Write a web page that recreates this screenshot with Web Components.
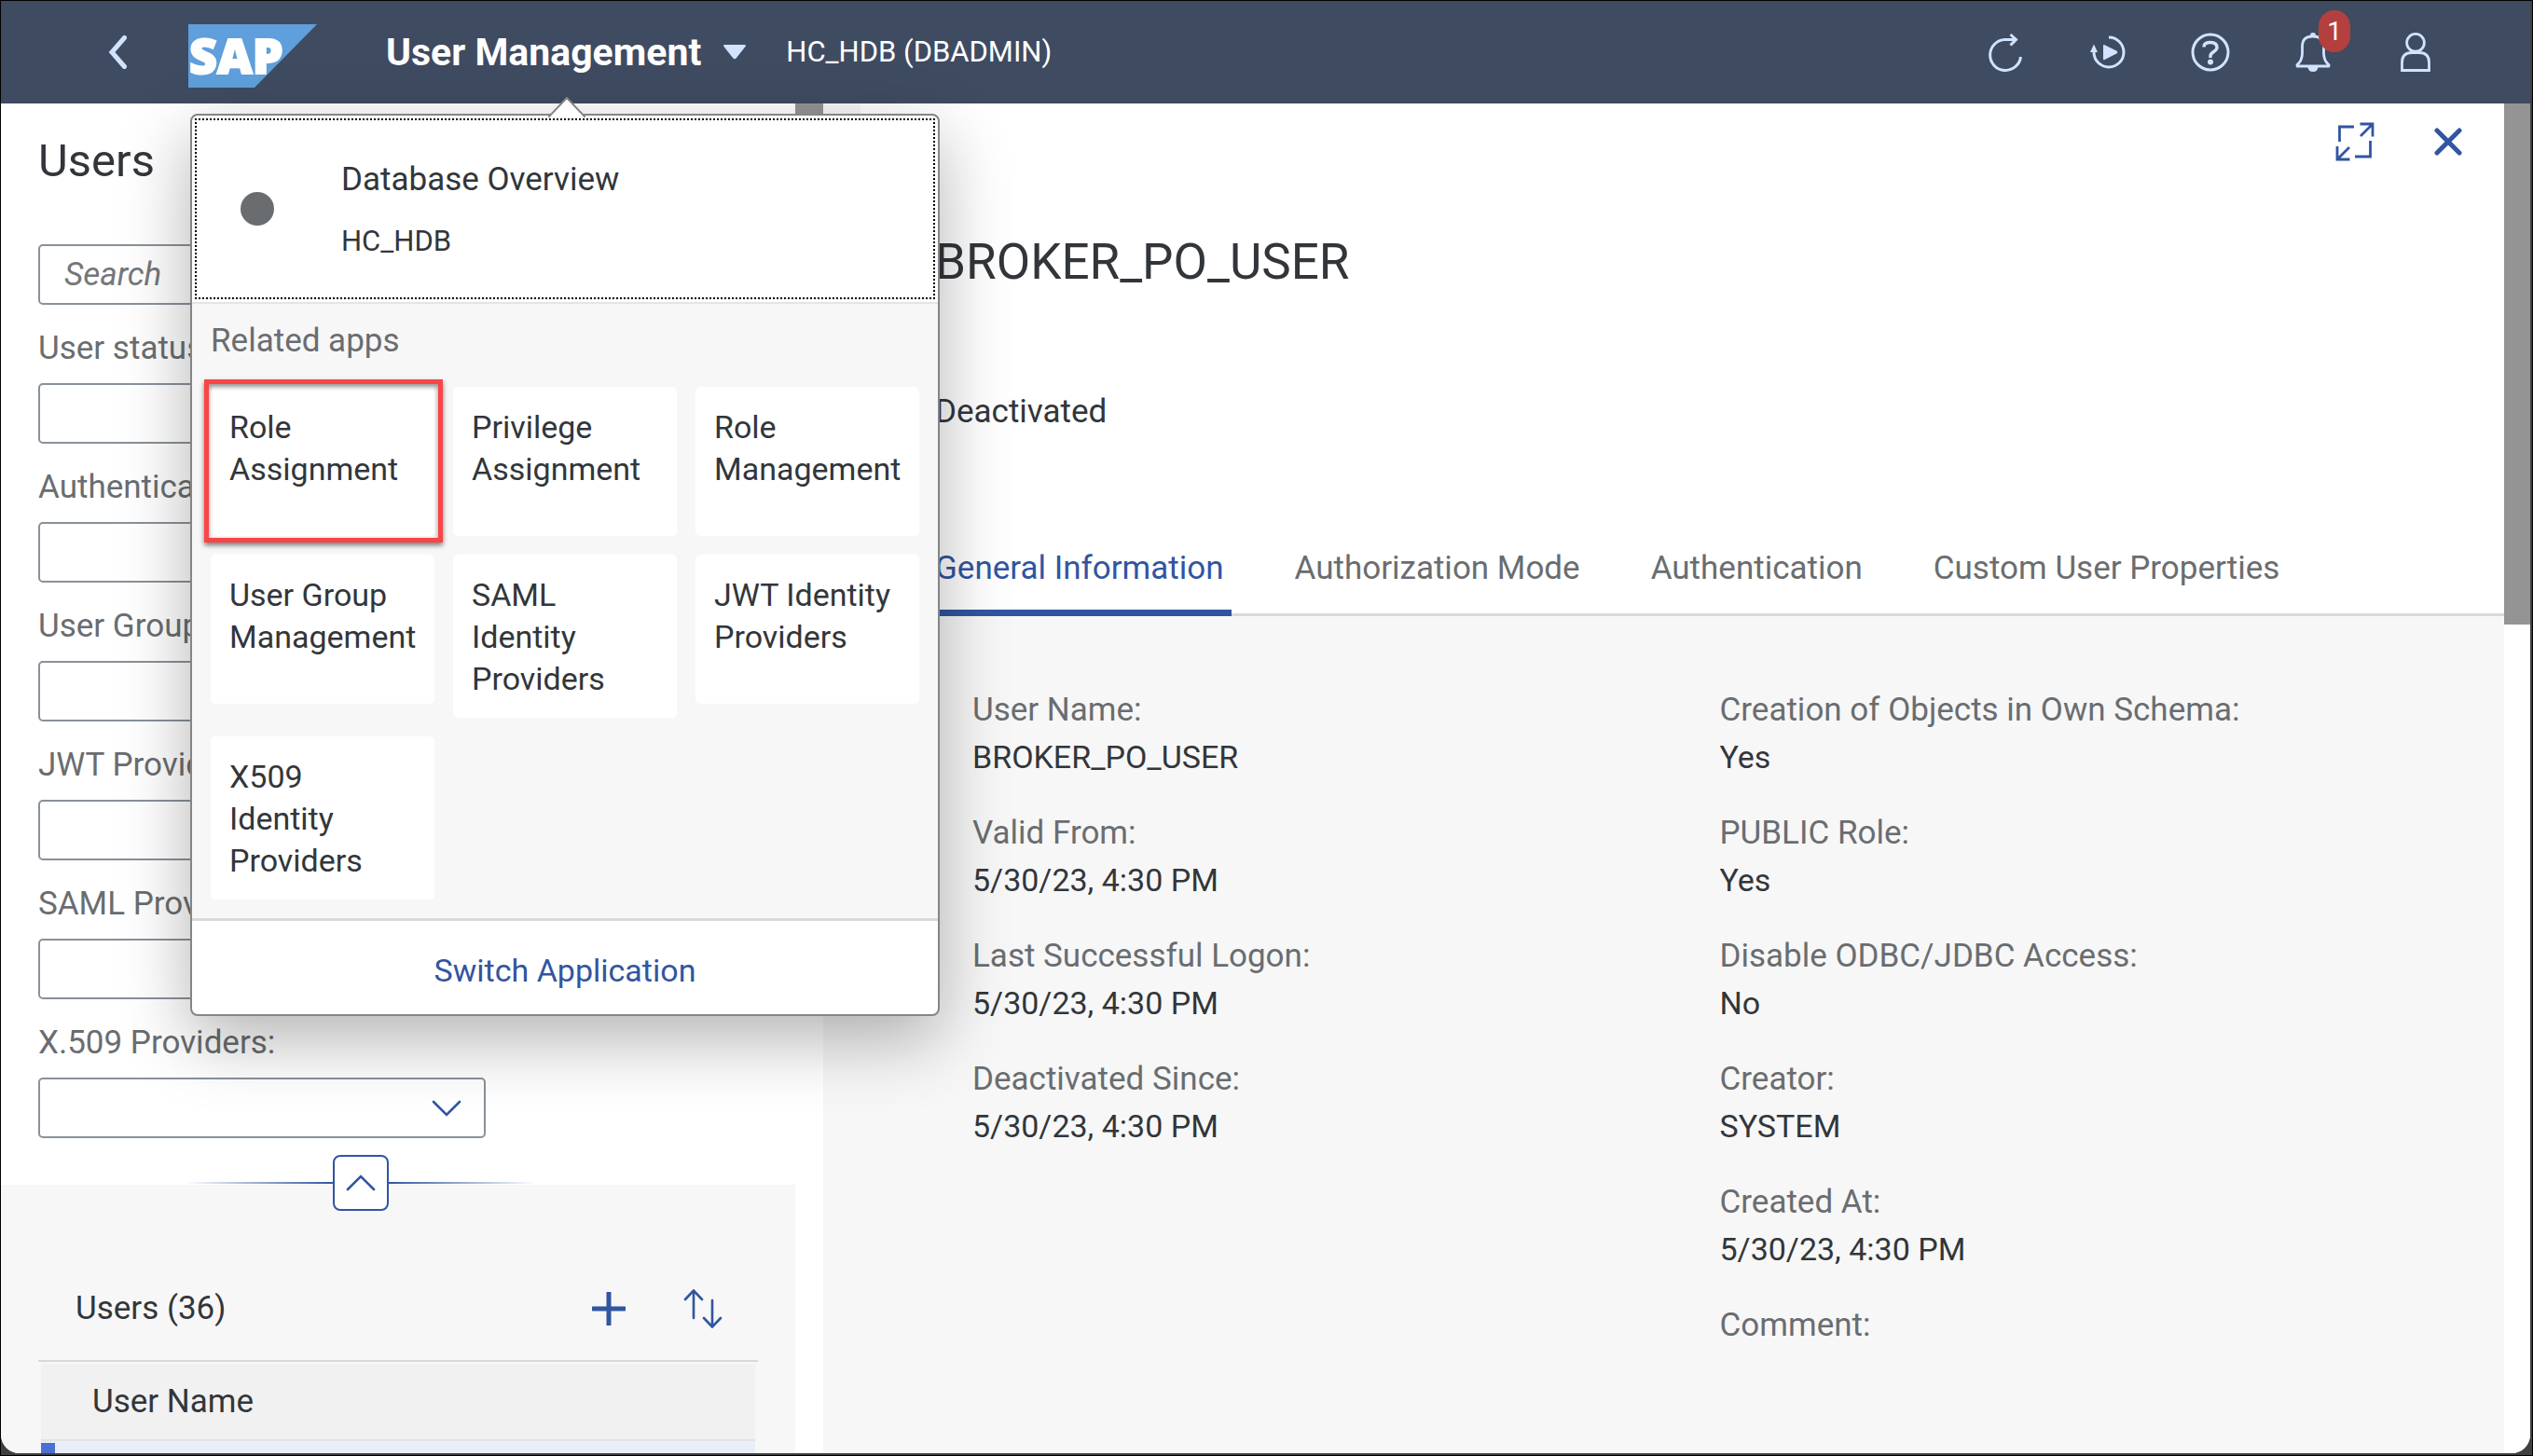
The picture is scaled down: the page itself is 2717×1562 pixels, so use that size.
<!DOCTYPE html>
<html lang="en">
<head>
<meta charset="utf-8">
<title>User Management</title>
<style>
  html { height: 100%; }
  body {
    margin: 0; height: 100vh; box-sizing: border-box; border: 1px solid #000;
    background: #404043; overflow: hidden;
    font-family: Roboto, "Liberation Sans", sans-serif; font-size: 35px; line-height: 50px; color: #32363a;
    --brand: #3155a1; --label: #6a6d70; --page: #f7f7f7; --line: #d9d9d9; --field: #89919a;
  }
</style>
</head>
<body>
<app-window></app-window>
<script>
const base = `*{box-sizing:border-box} button{font:inherit;color:inherit;background:none;border:0;padding:0;margin:0;cursor:pointer} h1,h2,h3,p,dl,dd,dt{margin:0;font:inherit}`;
function define(name, css, html) {
  const template = document.createElement('template');
  template.innerHTML = `<style>${base}${css}</style>`;
  customElements.define(name, class extends HTMLElement {
    constructor() {
      super();
      const root = this.attachShadow({ mode: 'open' });
      root.append(template.content.cloneNode(true));
      const body = document.createElement('template');
      body.innerHTML = typeof html === 'function' ? html(this) : html;
      root.append(body.content);
    }
  });
}

/* Icons: [width, height, markup] */
const icons = {
  back: [20, 36, '<path d="M17.500 2.500 4 18 17.500 33.500" stroke-width="5" stroke-linecap="round"/>'],
  caret: [24, 16, '<path d="M1 0H23Q24.500 0 23.500 2L14 14Q12 16.500 10 14L.5 2Q-.5 0 1 0Z" fill="currentColor" stroke="none"/>'],
  refresh: [40, 42, '<path d="M32 7.500H19.500A16.500 16.500 0 1 0 36.500 26" stroke-width="3"/><path d="M25.500 2 31.500 7.500 25.500 13.500" stroke-width="3"/>'],
  replay: [40, 36, '<path d="M21 2A16 16 0 1 1 5 18V13" stroke-width="3"/><path d="M1 18 5 9.500 9 18Z" fill="currentColor" stroke="none"/><path d="M15 11Q15 9.500 16.500 10.200L29.800 16.800Q31 18 29.800 19.200L16.500 26Q15 27 15 25Z" fill="currentColor" stroke="none"/>'],
  help: [42, 42, '<circle cx="21" cy="21" r="19" stroke-width="3"/><path d="M14 15.500C14 11.500 17 10.500 21 10.500S28 12 28 16C28 20.500 21 20.500 21 25V27" stroke-width="3.400"/><circle cx="21" cy="31.500" r="3" fill="currentColor" stroke="none"/>'],
  bell: [38, 42, '<path d="M2 34.500Q7.500 30 7.500 22V15Q7.500 4 19 4T30.500 15V22Q30.500 30 36 34.500V36H2Z" stroke-width="2.800" stroke-linejoin="round"/><path d="M16 3Q16 0 19 0T22 3ZM13.500 37H24.500Q24 42 19 42T13.500 37Z" fill="currentColor" stroke="none"/>'],
  person: [34, 42, '<circle cx="17" cy="10.800" r="9.400" stroke-width="2.800"/><path d="M2.500 40.500V32Q2.500 21.500 13 21.500H21Q31.500 21.500 31.500 32V40.500Z" stroke-width="2.800"/>'],
  expand: [42, 42, '<path d="M4.500 21V5H20M37.500 20V37H21M26.500 2H40V15.500M40 2 27 15M2 26V40H15.500M2 40 15 27" stroke-width="2.800"/>'],
  close: [30, 30, '<path d="M3 3 27 27M27 3 3 27" stroke-width="5" stroke-linecap="round"/>'],
  down: [32, 18, '<path d="M2 2 16 16 30 2" stroke-width="2.600" stroke-linecap="round"/>'],
  up: [32, 18, '<path d="M2 16 16 2 30 16" stroke-width="2.600" stroke-linecap="round"/>'],
  plus: [36, 36, '<path d="M18 1V35M1 18H35" stroke-width="5" stroke-linecap="round"/>'],
  sort: [42, 42, '<path d="M11 31V2M2 11 11 1.500 20 11M31 12V40M22 31 31 40.500 40 31" stroke-width="2.600" stroke-linecap="round"/>']
};
define('ui-icon', ':host{display:inline-flex} svg{display:block}', el => {
  const [w, h, d] = icons[el.getAttribute('name')];
  return `<svg width="${w}" height="${h}" viewBox="0 0 ${w} ${h}" fill="none" stroke="currentColor" aria-hidden="true">${d}</svg>`;
});

define('sap-logo', ':host{display:block} svg{display:block;overflow:visible}', `
  <svg width="138" height="68" viewBox="0 0 138 68" role="img" aria-label="SAP">
    <path d="M0 0H138L71 68H0Z" fill="#5f9fdb"/>
    <text x="1" y="53" font-family="Open Sans, Liberation Sans, sans-serif" font-weight="800" font-size="52" fill="#fff" stroke="#fff" stroke-width="2">SAP</text>
  </svg>`);

define('shell-header', `
  :host{display:flex;align-items:center;flex:none;height:110px;background:#3f4b61;color:#d1e3fe;padding:0 78px 0 80px}
  .back{width:90px;height:90px;display:grid;place-items:center}
  sap-logo{margin:7px 0 0 31px}
  .title{display:flex;align-items:center;gap:24px;margin-left:74px;color:#fff;font-weight:700;font-size:41px}
  .title ui-icon{color:#d1e3fe}
  .system{margin-left:43px;color:#fff;font-size:31px}
  nav{margin-left:auto;display:flex;gap:20px}
  nav button{position:relative;width:90px;height:90px;display:grid;place-items:center}
  .badge{position:absolute;left:51px;top:0;width:34px;height:45px;border-radius:17px;background:#b3403f;color:#fff;font-size:28px;line-height:46px}
`, `
  <button class="back" aria-label="Back"><ui-icon name="back"></ui-icon></button>
  <sap-logo></sap-logo>
  <button class="title"><span>User Management</span><ui-icon name="caret"></ui-icon></button>
  <span class="system">HC_HDB (DBADMIN)</span>
  <nav aria-label="Tools">
    <button aria-label="Refresh"><ui-icon name="refresh"></ui-icon></button>
    <button aria-label="Auto refresh"><ui-icon name="replay"></ui-icon></button>
    <button aria-label="Help"><ui-icon name="help"></ui-icon></button>
    <button aria-label="Notifications"><ui-icon name="bell"></ui-icon><span class="badge">1</span></button>
    <button aria-label="Profile"><ui-icon name="person"></ui-icon></button>
  </nav>`);

define('select-field', `
  :host{display:grid;gap:12px;color:var(--label)}
  .box{display:grid;align-items:center}
  .box>*{grid-area:1/1}
  select{appearance:none;font:inherit;width:100%;height:65px;border:2px solid var(--field);border-radius:5px;background:transparent;padding:0 70px 0 28px;margin:0}
  ui-icon{justify-self:end;margin-right:26px;color:var(--brand);pointer-events:none}
`, `
  <label for="field"><slot></slot></label>
  <div class="box"><select id="field"><option></option></select><ui-icon name="down"></ui-icon></div>`);

define('filter-panel', `
  :host{display:block;flex:none;padding:30px 40px 0;height:1160px;background:#fff}
  h2{font-size:49px;line-height:64px;margin:0 0 57px}
  form{display:grid;gap:22px;width:480px}
  input{font:inherit;font-style:italic;width:100%;height:65px;border:2px solid var(--field);border-radius:5px;background:#fff;padding:0 26px;margin:0}
  input::placeholder{color:#74777a;opacity:1}
`, `
  <h2>Users</h2>
  <form>
    <input type="search" aria-label="Search users" placeholder="Search">
    <select-field>User status:</select-field>
    <select-field>Authentication:</select-field>
    <select-field>User Group:</select-field>
    <select-field>JWT Providers:</select-field>
    <select-field>SAML Providers:</select-field>
    <select-field>X.509 Providers:</select-field>
  </form>`);

define('collapse-bar', `
  :host{display:flex;align-items:center;flex:none;width:376px;height:60px;margin:-32px 0 -28px 198px;color:var(--brand);z-index:1}
  i{flex:1;height:2px;background:linear-gradient(to right,transparent,currentColor)}
  i:last-child{background:linear-gradient(to left,transparent,currentColor)}
  button{width:60px;height:60px;border:2px solid;border-radius:8px;background:#fff;color:var(--brand);display:grid;place-items:center}
`, `<i></i><button aria-label="Collapse header"><ui-icon name="up"></ui-icon></button><i></i>`);

define('user-list', `
  :host{display:block;flex:1;min-height:0;overflow:hidden;background:var(--page);padding:78px 40px 0}
  header{display:flex;align-items:center;height:112px;padding:0 38px 0 40px;border-bottom:2px solid var(--line)}
  h3{margin-right:auto}
  header button{display:grid;color:var(--brand);margin-left:62px}
  table{width:calc(100% - 6px);margin:2px 3px 0;border-collapse:collapse}
  th{font-weight:400;text-align:left;height:82px;padding:0 55px;background:#f1f1f1;border-bottom:2px solid #e4e4e4}
  td{height:82px;padding:0;background:#e8effa}
  td i{display:block;width:15px;height:78px;background:#4a70d3}
`, `
  <header><h3>Users (36)</h3>
    <button aria-label="Create user"><ui-icon name="plus"></ui-icon></button>
    <button aria-label="Sort"><ui-icon name="sort"></ui-icon></button>
  </header>
  <table><thead><tr><th scope="col">User Name</th></tr></thead><tbody><tr><td><i></i></td></tr></tbody></table>`);

define('info-field', `
  :host{display:block;line-height:51px}
  dt{color:var(--label)}
  dd{min-height:51px;font-size:34px}
`, `<dl><dt><slot name="label"></slot></dt><dd><slot></slot></dd></dl>`);

define('object-page', `
  :host{display:flex;flex-direction:column;flex:1;min-width:0;background:var(--page)}
  header{position:relative;background:#fff;margin-left:40px;padding:140px 40px 0 80px}
  .actions{position:absolute;right:45px;top:20px;display:flex;align-items:center;gap:64px;color:var(--brand)}
  .actions button{display:grid}
  h1{font-size:53px;line-height:60px;margin-bottom:106px}
  .status{line-height:50px;margin-bottom:92px}
  .tabs{display:flex;gap:60px;height:102px;color:var(--label);background:#fff;margin-left:40px;padding:0 0 0 72px;border-bottom:3px solid var(--line)}
  .tabs button{display:flex;height:102px;padding:26px 8px 0;line-height:50px}
  .tabs button[aria-selected=true]{color:var(--brand);box-shadow:inset 0 -7px var(--brand);border-radius:4px 4px 0 0}
  .info{display:grid;grid-template-columns:1fr 1fr;padding:75px 40px 0 160px}
  .col{display:grid;gap:30px;align-content:start}
`, `
  <header>
    <div class="actions"><button aria-label="Full screen"><ui-icon name="expand"></ui-icon></button><button aria-label="Close"><ui-icon name="close"></ui-icon></button></div>
    <h1>BROKER_PO_USER</h1>
    <p class="status">Deactivated</p>
  </header>
  <div class="tabs" role="tablist">
    <button role="tab" aria-selected="true">General Information</button>
    <button role="tab">Authorization Mode</button>
    <button role="tab">Authentication</button>
    <button role="tab">Custom User Properties</button>
  </div>
  <section class="info">
    <div class="col">
      <info-field><span slot="label">User Name:</span>BROKER_PO_USER</info-field>
      <info-field><span slot="label">Valid From:</span>5/30/23, 4:30 PM</info-field>
      <info-field><span slot="label">Last Successful Logon:</span>5/30/23, 4:30 PM</info-field>
      <info-field><span slot="label">Deactivated Since:</span>5/30/23, 4:30 PM</info-field>
    </div>
    <div class="col">
      <info-field><span slot="label">Creation of Objects in Own Schema:</span>Yes</info-field>
      <info-field><span slot="label">PUBLIC Role:</span>Yes</info-field>
      <info-field><span slot="label">Disable ODBC/JDBC Access:</span>No</info-field>
      <info-field><span slot="label">Creator:</span>SYSTEM</info-field>
      <info-field><span slot="label">Created At:</span>5/30/23, 4:30 PM</info-field>
      <info-field><span slot="label">Comment:</span></info-field>
    </div>
  </section>`);

define('scroll-bar', `
  :host{display:block;flex:none;background:#fff}
  i{display:block;height:559px;background:#949494}
`, `<i></i>`);

define('app-tile', `
  :host{display:block;position:relative}
  button{display:flex;width:100%;min-height:160px;padding:21px 24px 19px 20px;border-radius:5px;background:#fff;text-align:left;font-size:34px;line-height:45px}
  :host([marked])::after{content:"";position:absolute;inset:-8px -9px -7px -7px;border:5px solid #fa4446;box-shadow:0 3px 5px rgba(0,0,0,.5),inset 0 3px 5px rgba(0,0,0,.4)}
`, `<button><slot></slot></button>`);

define('app-switcher', `
  :host{position:absolute;left:203px;top:121px;width:804px;border:2px solid #858585;border-radius:8px;background:#fff;box-shadow:0 25px 75px rgba(0,0,0,.3);z-index:2}
  .arrow{position:absolute;left:382px;top:-20px}
  .current{display:flex;align-items:center;width:100%;height:202px;padding:3px;border-bottom:2px solid #e4e4e4}
  .focus{display:flex;align-items:center;flex:1;height:194px;border:2px dotted #000;gap:72px;padding-left:47px;text-align:left}
  .dot{width:36px;height:36px;border-radius:50%;background:#6a6d70}
  .lines{display:grid;gap:16px;padding-top:3px}
  small{font-size:31px}
  section{background:var(--page);padding:0 20px 20px}
  h2{color:var(--label);line-height:80px;margin-bottom:9px}
  .grid{display:grid;grid-template-columns:repeat(3,minmax(0,1fr));gap:20px;align-items:start}
  .switch{display:block;width:100%;height:103px;padding-top:5px;border-top:3px solid var(--line);color:var(--brand);font-size:34px}
`, `
  <svg class="arrow" width="40" height="22" viewBox="0 0 40 22" aria-hidden="true"><path d="M0 22 20 1 40 22" fill="#fff" stroke="#858585" stroke-width="2"/></svg>
  <button class="current"><span class="focus"><span class="dot"></span><span class="lines"><span>Database Overview</span><small>HC_HDB</small></span></span></button>
  <section>
    <h2>Related apps</h2>
    <div class="grid">
      <app-tile marked>Role Assignment</app-tile>
      <app-tile>Privilege Assignment</app-tile>
      <app-tile>Role Management</app-tile>
      <app-tile>User Group Management</app-tile>
      <app-tile>SAML Identity Providers</app-tile>
      <app-tile>JWT Identity Providers</app-tile>
      <app-tile>X509 Identity Providers</app-tile>
    </div>
  </section>
  <button class="switch">Switch Application</button>`);

define('app-window', `
  :host{display:flex;flex-direction:column;position:relative;height:calc(100% - 2px);margin-right:2px;overflow:hidden;border-radius:0 0 20px 20px;background:#fff}
  main{display:flex;flex:1;min-height:0}
  .list{display:flex;flex-direction:column;flex:none;width:852px;min-height:0}
  .inner{width:30px}
  .outer{width:28px}
`, `
  <shell-header></shell-header>
  <main>
    <div class="list"><filter-panel></filter-panel><collapse-bar></collapse-bar><user-list></user-list></div>
    <scroll-bar class="inner"></scroll-bar>
    <object-page></object-page>
    <scroll-bar class="outer"></scroll-bar>
  </main>
  <app-switcher></app-switcher>`);
</script>
</body>
</html>
